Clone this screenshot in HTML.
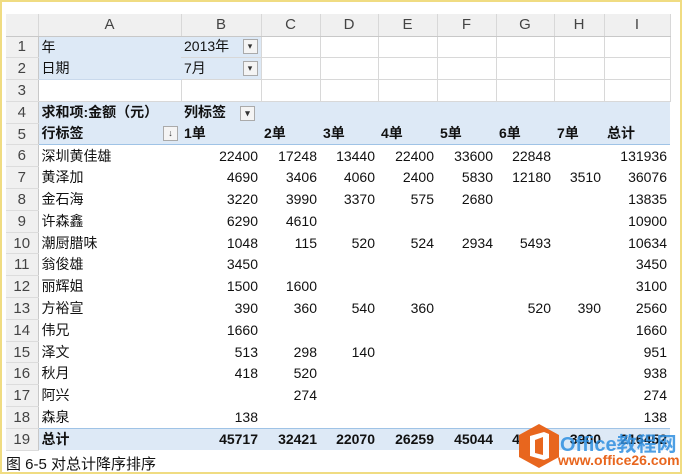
<!DOCTYPE html>
<html><head><meta charset="utf-8"><style>
body{margin:0;width:682px;height:474px;background:#fff;position:relative;overflow:hidden;font-family:"Liberation Sans","Noto Sans CJK SC",sans-serif;}
.frame{position:absolute;left:0;top:0;width:678px;height:470px;border:2px solid #f0dc82;}
table{position:absolute;left:6px;top:14px;border-collapse:collapse;table-layout:fixed;font-size:14px;color:#111;}
td{height:21.8px;max-height:21.8px;padding:0 3px;white-space:nowrap;overflow:hidden;line-height:17px;box-sizing:border-box;}
tr{height:21.8px;}
tr.h td{height:22px;background:#f0f0f0;color:#444;text-align:center;font-size:15px;border-right:1px solid #d8d8d8;border-bottom:1px solid #c8c8c8;}
td.rh{background:#f0f0f0;color:#444;text-align:center;border-right:1px solid #c8c8c8;border-bottom:1px solid #dcdcdc;font-size:15px;}
td.g{border-right:1px solid #d8d8d8;border-bottom:1px solid #d8d8d8;}
.bl{background:#dde9f6;}
.b{font-weight:bold;}
.r{text-align:right;}
.btn{display:inline-block;width:13px;height:13px;border:1px solid #aaa;background:#f4f4f4;vertical-align:middle;float:right;margin-top:1px;font-size:9px;line-height:13px;text-align:center;color:#333}
tr.t td.bl{border-top:1px solid #9fc3e6;}
tr.p5 td.bl{border-bottom:1px solid #9fc3e6;}
</style></head><body>
<div class="frame"></div>
<table>
<colgroup><col style="width:32px"><col style="width:143px"><col style="width:80px"><col style="width:59px"><col style="width:58px"><col style="width:59px"><col style="width:59px"><col style="width:58px"><col style="width:50px"><col style="width:66px"></colgroup>
<tr class="h"><td></td><td>A</td><td>B</td><td>C</td><td>D</td><td>E</td><td>F</td><td>G</td><td>H</td><td>I</td></tr>
<tr><td class="rh">1</td><td class="bl">年</td><td class="bl g">2013年<span class="btn">▾</span></td><td class="g"></td><td class="g"></td><td class="g"></td><td class="g"></td><td class="g"></td><td class="g"></td><td class="g"></td></tr>
<tr><td class="rh">2</td><td class="bl" style="border-bottom:1px solid #c9d9ec">日期</td><td class="bl g">7月<span class="btn">▾</span></td><td class="g"></td><td class="g"></td><td class="g"></td><td class="g"></td><td class="g"></td><td class="g"></td><td class="g"></td></tr>
<tr><td class="rh">3</td><td class="g"></td><td class="g"></td><td class="g"></td><td class="g"></td><td class="g"></td><td class="g"></td><td class="g"></td><td class="g"></td><td class="g"></td></tr>
<tr class="b"><td class="rh" style="font-weight:normal">4</td><td class="bl">求和项:金额（元）</td><td class="bl">列标签<span class="btn" style="float:none;margin-left:14px">▾</span></td><td class="bl"></td><td class="bl"></td><td class="bl"></td><td class="bl"></td><td class="bl"></td><td class="bl"></td><td class="bl"></td></tr>
<tr class="b p5"><td class="rh" style="font-weight:normal">5</td><td class="bl">行标签<span class="btn">↓</span></td><td class="bl">1单</td><td class="bl">2单</td><td class="bl">3单</td><td class="bl">4单</td><td class="bl">5单</td><td class="bl">6单</td><td class="bl">7单</td><td class="bl">总计</td></tr>
<tr class="r"><td class="rh">6</td><td style="text-align:left">深圳黄佳雄</td><td>22400</td><td>17248</td><td>13440</td><td>22400</td><td>33600</td><td>22848</td><td></td><td>131936</td></tr>
<tr class="r"><td class="rh">7</td><td style="text-align:left">黄泽加</td><td>4690</td><td>3406</td><td>4060</td><td>2400</td><td>5830</td><td>12180</td><td>3510</td><td>36076</td></tr>
<tr class="r"><td class="rh">8</td><td style="text-align:left">金石海</td><td>3220</td><td>3990</td><td>3370</td><td>575</td><td>2680</td><td></td><td></td><td>13835</td></tr>
<tr class="r"><td class="rh">9</td><td style="text-align:left">许森鑫</td><td>6290</td><td>4610</td><td></td><td></td><td></td><td></td><td></td><td>10900</td></tr>
<tr class="r"><td class="rh">10</td><td style="text-align:left">潮厨腊味</td><td>1048</td><td>115</td><td>520</td><td>524</td><td>2934</td><td>5493</td><td></td><td>10634</td></tr>
<tr class="r"><td class="rh">11</td><td style="text-align:left">翁俊雄</td><td>3450</td><td></td><td></td><td></td><td></td><td></td><td></td><td>3450</td></tr>
<tr class="r"><td class="rh">12</td><td style="text-align:left">丽辉姐</td><td>1500</td><td>1600</td><td></td><td></td><td></td><td></td><td></td><td>3100</td></tr>
<tr class="r"><td class="rh">13</td><td style="text-align:left">方裕宣</td><td>390</td><td>360</td><td>540</td><td>360</td><td></td><td>520</td><td>390</td><td>2560</td></tr>
<tr class="r"><td class="rh">14</td><td style="text-align:left">伟兄</td><td>1660</td><td></td><td></td><td></td><td></td><td></td><td></td><td>1660</td></tr>
<tr class="r"><td class="rh">15</td><td style="text-align:left">泽文</td><td>513</td><td>298</td><td>140</td><td></td><td></td><td></td><td></td><td>951</td></tr>
<tr class="r"><td class="rh">16</td><td style="text-align:left">秋月</td><td>418</td><td>520</td><td></td><td></td><td></td><td></td><td></td><td>938</td></tr>
<tr class="r"><td class="rh">17</td><td style="text-align:left">阿兴</td><td></td><td>274</td><td></td><td></td><td></td><td></td><td></td><td>274</td></tr>
<tr class="r"><td class="rh">18</td><td style="text-align:left">森泉</td><td>138</td><td></td><td></td><td></td><td></td><td></td><td></td><td>138</td></tr>
<tr class="r b t"><td class="rh" style="font-weight:normal">19</td><td class="bl" style="text-align:left">总计</td><td class="bl">45717</td><td class="bl">32421</td><td class="bl">22070</td><td class="bl">26259</td><td class="bl">45044</td><td class="bl">41021</td><td class="bl">3900</td><td class="bl">216452</td></tr>
</table>
<div style="position:absolute;left:6px;top:453px;font-size:15px;color:#111;">图 6-5 对总计降序排序</div>
<svg style="position:absolute;left:515px;top:422px" width="48" height="48" viewBox="0 0 48 48"><polygon points="24,2 44,13 44,35 24,46 4,35 4,13" fill="#e8661e"/><path d="M15 14 L29 10 L34 12 L34 36 L29 38 L15 34 Z M20 18 L20 31 L28 33 L28 15 Z" fill="#fff"/></svg>
<div style="position:absolute;left:560px;top:428px;font-size:20px;font-weight:bold;color:#2f8fe0;opacity:.85">Office教程网</div>
<div style="position:absolute;left:558px;top:452px;font-size:14px;font-weight:bold;color:#e8661e;">www.office26.com</div>
</body></html>
